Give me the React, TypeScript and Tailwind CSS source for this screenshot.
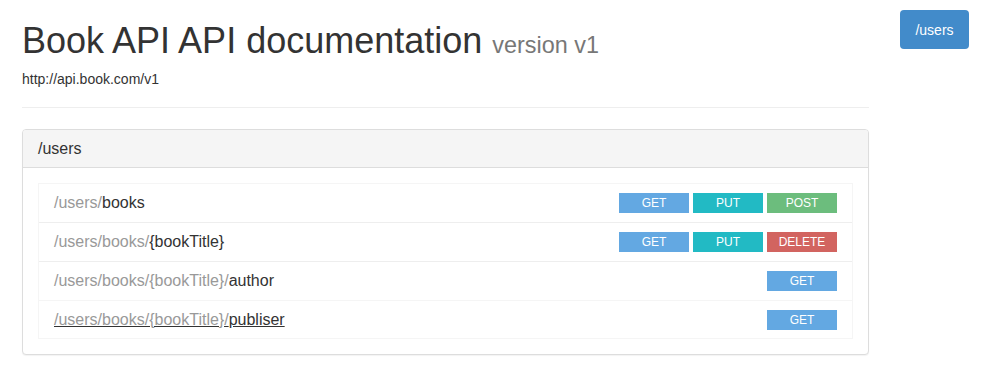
import React from "react";

type Method = "GET" | "PUT" | "POST" | "DELETE";

const methodClass: Record<Method, string> = {
  GET: "bg-[#63a8e2]",
  PUT: "bg-[#22bac4]",
  POST: "bg-[#6cbd7d]",
  DELETE: "bg-[#d26460]",
};

const rows: { parent: string; tail: string; methods: Method[]; hover?: boolean }[] = [
  { parent: "/users/", tail: "books", methods: ["GET", "PUT", "POST"] },
  { parent: "/users/books/", tail: "{bookTitle}", methods: ["GET", "PUT", "DELETE"] },
  { parent: "/users/books/{bookTitle}/", tail: "author", methods: ["GET"] },
  { parent: "/users/books/{bookTitle}/", tail: "publiser", methods: ["GET"], hover: true },
];

export default function App() {
  return (
    <div
      className="min-h-[383px] w-[994px] bg-white text-[#333] text-[14px] leading-[20px]"
      style={{ fontFamily: '"Liberation Sans", Arial, Helvetica, sans-serif' }}
    >
      <div className="flex pl-[22px]">
        <div className="w-[847px]">
          <h1 className="mt-[23px] h-[36px] text-[36px] leading-[36px] font-normal text-[#333] whitespace-nowrap">
            Book API API documentation{" "}
            <small className="text-[23.4px] leading-none text-[#777]">version v1</small>
          </h1>
          <p className="mt-[10px] m-0 h-[20px] text-[14px] leading-[20px]">http://api.book.com/v1</p>
          <div className="mt-[18px] border-t border-[#eee]" />
          <div className="mt-[21px] rounded-[4px] border border-[#ddd] bg-white shadow-[0_1px_1px_rgba(0,0,0,0.05)]">
            <div className="rounded-t-[3px] border-b border-[#ddd] bg-[#f5f5f5] px-[15px] h-[38px] flex items-center">
              <span className="text-[16px] leading-[17.6px] text-[#333]">/users</span>
            </div>
            <div className="p-[15px]">
              <div className="border-x border-[#f5f5f5]">
                {rows.map((r, i) => (
                  <div
                    key={i}
                    className={`flex h-[39px] items-center justify-between pl-[15px] pr-[15px] ${
                      i === 0 ? "border-t border-[#f5f5f5]" : "border-t border-[#eeeeee]"
                    } ${i === rows.length - 1 ? "border-b border-[#f5f5f5]" : ""}`}
                  >
                    <span className={`text-[16px] leading-[22px] ${r.hover ? "underline" : ""}`}>
                      <span className="text-[#999]">{r.parent}</span>
                      <span className="text-[#333]">{r.tail}</span>
                    </span>
                    <div className="flex gap-[4px]">
                      {r.methods.map((m) => (
                        <span
                          key={m}
                          className={`${methodClass[m]} flex h-[20px] w-[70px] items-center justify-center text-[12px] leading-[12px] text-white`}
                        >
                          {m}
                        </span>
                      ))}
                    </div>
                  </div>
                ))}
              </div>
            </div>
          </div>
        </div>
        <div className="ml-[31px] pt-[10px]">
          <div className="flex h-[39px] w-[69px] items-center justify-center rounded-[4px] bg-[#428bca] text-[14px] text-white">
            /users
          </div>
        </div>
      </div>
    </div>
  );
}
